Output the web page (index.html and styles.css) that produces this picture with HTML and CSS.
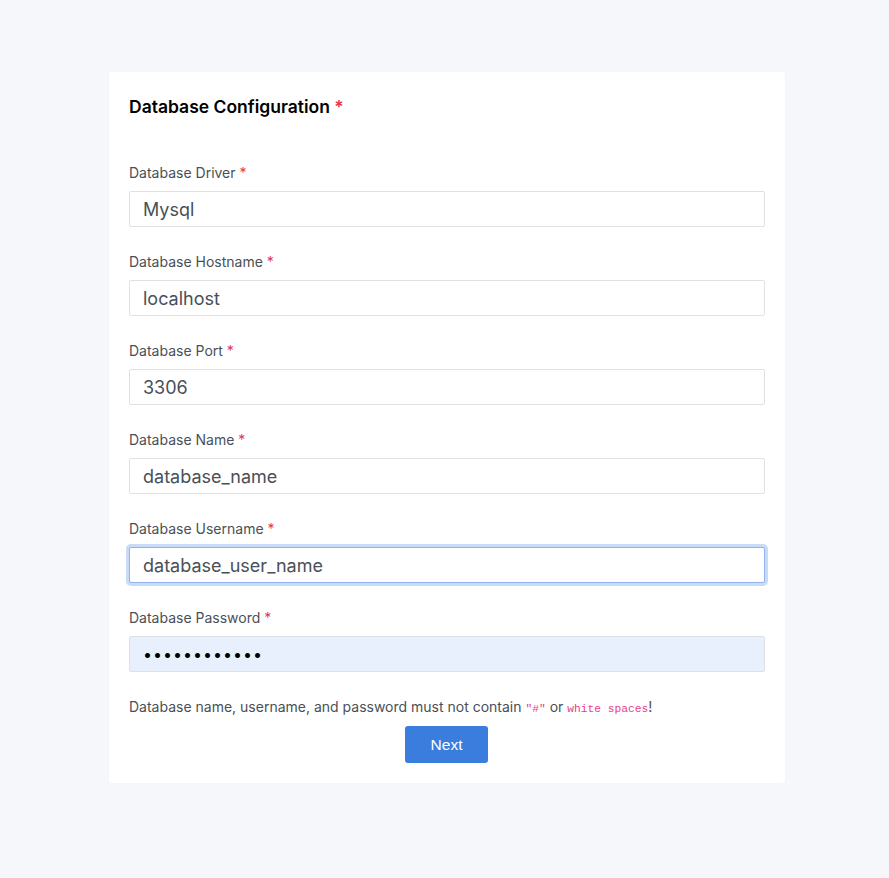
FILE: index.html
```html
<!DOCTYPE html>
<html lang="en">
<head>
<meta charset="utf-8">
<title>Database Configuration</title>
<link rel="stylesheet" href="styles.css">
</head>
<body>
<div class="wrap">
  <form class="card">
    <h2 class="title">Database Configuration <span class="req">*</span></h2>
    <div class="field">
      <label class="label">Database Driver <span class="req">*</span></label>
      <input class="input" type="text" value="Mysql">
    </div>
    <div class="field">
      <label class="label">Database Hostname <span class="req">*</span></label>
      <input class="input" type="text" value="localhost">
    </div>
    <div class="field">
      <label class="label">Database Port <span class="req">*</span></label>
      <input class="input" type="text" value="3306">
    </div>
    <div class="field">
      <label class="label">Database Name <span class="req">*</span></label>
      <input class="input" type="text" value="database_name">
    </div>
    <div class="field">
      <label class="label">Database Username <span class="req">*</span></label>
      <input class="input focused" type="text" value="database_user_name">
    </div>
    <div class="field">
      <label class="label">Database Password <span class="req">*</span></label>
      <input class="input autofill" type="password" value="passwordpass">
    </div>
    <p class="help">Database name, username, and password must not contain <code>"#"</code> or <code>white spaces</code>!</p>
    <div class="actions">
      <button class="btn" type="button">Next</button>
    </div>
  </form>
</div>
</body>
</html>
```
FILE: styles.css
```css
html, body {
  margin: 0;
  padding: 0;
  background: #f6f7fb;
}
body {
  font-family: Inter, "Noto Sans", sans-serif;
}
.wrap {
  padding: 72px 0 0 109px;
}
.card {
  width: 636px;
  background: #fff;
  padding: 21px 20px 20px 20px;
  border-radius: 3px;
  box-shadow: 0 0 2px rgba(0,0,0,0.04);
}
.title {
  margin: 0 0 42px 0;
  font-size: 17.5px;
  line-height: 28px;
  font-weight: 600;
  color: #000;
}
.req {
  color: #e5354f;
}
.field {
  display: flex;
  flex-direction: column;
  margin-bottom: 25px;
}
.label {
  font-size: 14px;
  line-height: 20px;
  color: #495057;
  margin-bottom: 8px;
}
.input {
  box-sizing: border-box;
  width: 100%;
  height: 36px;
  padding: 0 13px;
  border: 1px solid #dfe1e6;
  border-radius: 2px;
  font-family: Inter, "Noto Sans", sans-serif;
  font-size: 18px;
  color: #495057;
  background: #fff;
  outline: none;
}
.input.focused {
  border-color: #8fb4ee;
  box-shadow: 0 0 0 3px #c9dbf7;
}
.input.autofill {
  background: #e8f0fe;
  color: #000;
  letter-spacing: 1px;
  font-size: 16px;
}
.help {
  margin: 0 0 7px 0;
  font-family: Inter, "Noto Sans", sans-serif;
  font-size: 14px;
  line-height: 20px;
  color: #495057;
}
.help code {
  font-family: "Liberation Mono", "DejaVu Sans Mono", monospace;
  font-size: 11.25px;
  color: #e83e8c;
}
.actions {
  display: flex;
  justify-content: center;
  padding-right: 1px;
}
.btn {
  width: 83px;
  height: 37px;
  background: #3b7ddd;
  color: #fff;
  border: none;
  border-radius: 3px;
  font-family: "Liberation Sans", Arial, sans-serif;
  font-size: 15.5px;
  cursor: pointer;
}
```
